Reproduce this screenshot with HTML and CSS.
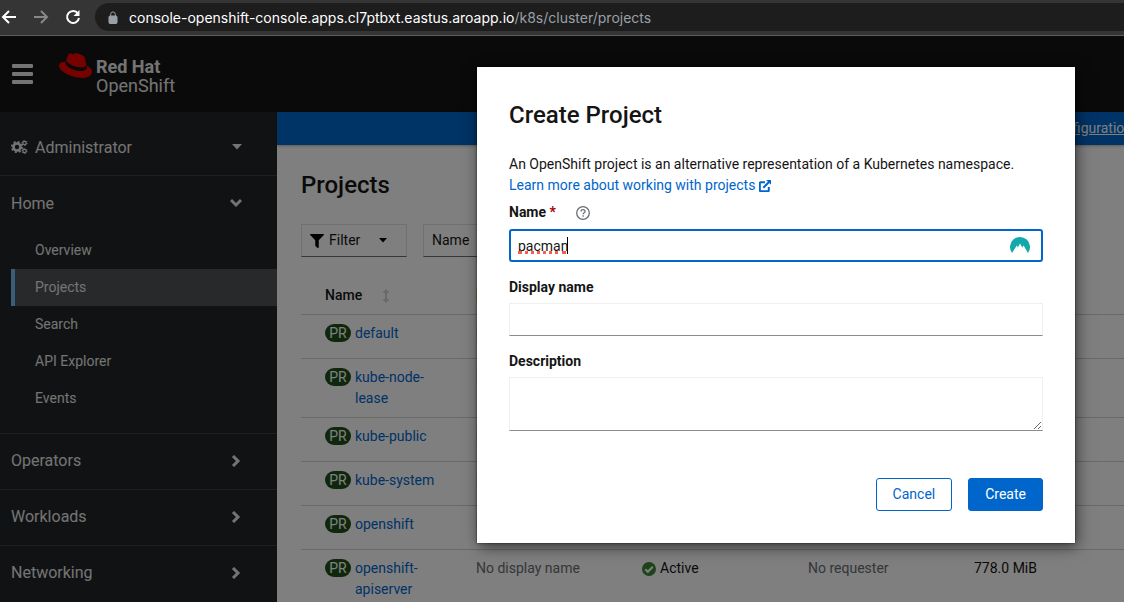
FILE: index.html
```html
<!DOCTYPE html>
<html lang="en">
<head>
<meta charset="utf-8">
<title>Projects · Red Hat OpenShift</title>
<link rel="stylesheet" href="styles.css">
</head>
<body>
<div class="browser-bar">
  <button class="nav-btn" aria-label="Back"><svg width="16" height="16" viewBox="0 0 16 16"><path d="M15 8H2M8 2 2 8l6 6" /></svg></button>
  <button class="nav-btn nav-btn-off" aria-label="Forward"><svg width="16" height="16" viewBox="0 0 16 16"><path d="M1 8h13M8 2l6 6-6 6" /></svg></button>
  <button class="nav-btn" aria-label="Reload"><svg width="16" height="16" viewBox="0 0 16 16"><path d="M13 4.500A6 6 0 1 0 14 9" /><path class="solid" d="M14.500 1v6h-6z" /></svg></button>
  <div class="address">
    <svg class="lock" width="10" height="13" viewBox="0 0 10 13"><rect x="1" y="5" width="8" height="7.500" rx="1" /><path d="M2.700 5V3.200a2.300 2.300 0 0 1 4.600 0V5" /></svg>
    <span class="url"><span class="host">console-openshift-console.apps.cl7ptbxt.eastus.aroapp.io</span>/k8s/cluster/projects</span>
  </div>
</div>
<div class="app">
  <header class="masthead">
    <button class="menu-btn" aria-label="Menu"><span></span><span></span><span></span></button>
    <div class="brand">
      <svg class="hat" width="33" height="25" viewBox="0 2.9 24 18.2"><path d="M16.009 13.386c1.577 0 3.86-.326 3.86-2.202a1.765 1.765 0 0 0-.04-.431l-.94-4.08c-.216-.898-.406-1.305-1.982-2.093-1.223-.625-3.888-1.658-4.676-1.658-.733 0-.947.946-1.822.946-.842 0-1.467-.706-2.255-.706-.757 0-1.25.515-1.63 1.576 0 0-1.06 2.99-1.197 3.424a.81.81 0 0 0-.028.245c0 1.162 4.577 4.974 10.71 4.974m4.101-1.435c.218 1.032.218 1.14.218 1.277 0 1.765-1.984 2.745-4.593 2.745-5.895.004-11.06-3.451-11.06-5.734a2.326 2.326 0 0 1 .19-.925C2.746 9.415 0 9.794 0 12.217c0 3.969 9.405 8.861 16.851 8.861 5.71 0 7.149-2.582 7.149-4.62 0-1.605-1.387-3.425-3.887-4.512" /></svg>
      <div class="brand-name"><b>Red Hat</b><span>OpenShift</span></div>
    </div>
  </header>
  <div class="body">
    <nav class="sidebar">
      <button class="perspective">
        <svg class="cogs" width="17" height="14" viewBox="0 0 17 14"><circle cx="6" cy="7" r="3.500" stroke-width="2.600" /><circle cx="6" cy="7" r="5.200" stroke-width="1.800" stroke-dasharray="2.040 2.040" /><circle cx="13.500" cy="3" r="1.700" stroke-width="1.300" /><circle cx="13.500" cy="3" r="2.600" stroke-width="1" stroke-dasharray="1.360 1.360" /><circle cx="13.500" cy="11" r="1.700" stroke-width="1.300" /><circle cx="13.500" cy="11" r="2.600" stroke-width="1" stroke-dasharray="1.360 1.360" /></svg>
        <span class="grow">Administrator</span>
        <svg class="caret" width="10" height="6" viewBox="0 0 10 6"><path d="M0 0h10L5 5.500z" /></svg>
      </button>
      <button class="section"><span class="grow">Home</span><svg class="chev" width="12" height="12" viewBox="0 0 12 12"><path d="m1 3 5 5 5-5" /></svg></button>
      <ul class="sub">
        <li><a href="#">Overview</a></li>
        <li><a href="#" class="current">Projects</a></li>
        <li><a href="#">Search</a></li>
        <li><a href="#">API Explorer</a></li>
        <li><a href="#">Events</a></li>
      </ul>
      <button class="section ruled"><span class="grow">Operators</span><svg class="chev" width="12" height="12" viewBox="0 0 12 12"><path d="m3 1 5 5-5 5" /></svg></button>
      <button class="section ruled"><span class="grow">Workloads</span><svg class="chev" width="12" height="12" viewBox="0 0 12 12"><path d="m3 1 5 5-5 5" /></svg></button>
      <button class="section ruled"><span class="grow">Networking</span><svg class="chev" width="12" height="12" viewBox="0 0 12 12"><path d="m3 1 5 5-5 5" /></svg></button>
    </nav>
    <main class="main">
      <div class="banner"><a href="#">configuration</a></div>
      <div class="content">
        <h1>Projects</h1>
        <div class="toolbar">
          <button class="tool filter"><svg width="14" height="14" viewBox="0 0 512 512"><path d="M487.976 0H24.028C2.710 0-8.047 25.866 7.058 40.971L192 225.941V432c0 7.831 3.821 15.170 10.237 19.662l80 55.980C298.020 518.690 320 507.493 320 487.980V225.941l184.947-184.970C520.021 25.896 509.338 0 487.976 0z" /></svg><span>Filter</span><svg class="drop" width="8" height="5" viewBox="0 0 8 5"><path d="M0 0h8L4 4.500z" /></svg></button>
          <button class="tool by-name">Name</button>
        </div>
        <table>
          <colgroup><col class="col-name"><col class="col"><col class="col"><col class="col"><col></colgroup>
          <thead><tr><th><span class="sort">Name<svg width="8" height="14" viewBox="0 0 8 14"><path d="M4 0 7.500 4H5v6h2.500L4 14 .5 10H3V4H.5z" /></svg></span></th><th>Display name</th><th></th><th></th><th></th></tr></thead>
          <tbody>
            <tr><td><div class="res"><span class="pr">PR</span><a href="#">default</a></div></td><td class="muted">No display name</td><td></td><td></td><td></td></tr>
            <tr><td><div class="res"><span class="pr">PR</span><a href="#">kube-node-lease</a></div></td><td class="muted">No display name</td><td></td><td></td><td></td></tr>
            <tr><td><div class="res"><span class="pr">PR</span><a href="#">kube-public</a></div></td><td class="muted">No display name</td><td></td><td></td><td></td></tr>
            <tr><td><div class="res"><span class="pr">PR</span><a href="#">kube-system</a></div></td><td class="muted">No display name</td><td></td><td></td><td></td></tr>
            <tr><td><div class="res"><span class="pr">PR</span><a href="#">openshift</a></div></td><td class="muted">No display name</td><td></td><td></td><td></td></tr>
            <tr><td><div class="res"><span class="pr">PR</span><a href="#">openshift-apiserver</a></div></td><td class="muted">No display name</td><td><span class="status"><svg width="14" height="14" viewBox="0 0 14 14"><circle cx="7" cy="7" r="7" /><path d="m3.300 7.300 2.500 2.500 5-5" /></svg>Active</span></td><td class="muted">No requester</td><td>778.0 MiB</td></tr>
          </tbody>
        </table>
      </div>
    </main>
  </div>
  <div class="backdrop">
    <form class="modal" role="dialog" aria-labelledby="dlg-title">
      <h2 id="dlg-title">Create Project</h2>
      <p>An OpenShift project is an alternative representation of a Kubernetes namespace.<br>
        <a href="#">Learn more about working with projects <svg width="12" height="12" viewBox="0 0 12 12"><path d="M6 2.200H1.800a1 1 0 0 0-1 1v7a1 1 0 0 0 1 1h7a1 1 0 0 0 1-1V7M4.300 7.700 10 2" /><path class="solid" d="M7.200 0H12v4.800z" /></svg></a></p>
      <div class="label-row"><label for="name">Name <span class="req">*</span></label><button type="button" class="help" aria-label="Help"><svg width="14" height="14" viewBox="0 0 14 14"><circle cx="7" cy="7" r="6.300" /><path d="M5 5.600c0-2.600 4-2.500 4-.2 0 1.400-1.900 1.400-1.900 2.900M7.100 9.300v1.500" /></svg></button></div>
      <div class="name-field">
        <input id="name" class="field active" type="text" value="pacman" spellcheck="false">
        <span class="squiggle"></span>
        <span class="cursor"></span>
        <svg class="vpn" width="20" height="17" viewBox="0 0 20 17"><path d="M2 17A10 10 0 1 1 18 17L13.600 9.600 12.300 11.500 12.700 12.300 10 7.500 7.500 12.300 7.800 11 6.800 9.600z" /></svg>
      </div>
      <label class="gap" for="display">Display name</label>
      <input id="display" class="field" type="text">
      <label class="gap" for="desc">Description</label>
      <textarea id="desc" class="field area"></textarea>
      <div class="actions"><button type="button" class="btn">Cancel</button><button type="button" class="btn primary">Create</button></div>
    </form>
  </div>
</div>
</body>
</html>
```
FILE: styles.css
```css
* { box-sizing: border-box; }
body {
  margin: 0;
  height: 100vh;
  display: flex;
  flex-direction: column;
  overflow: hidden;
  font: 14px/21px Roboto, "Liberation Sans", sans-serif;
  color: #151515;
}
button, input, textarea { font: inherit; color: inherit; }
button { padding: 0; border: 0; background: none; text-align: left; }
a { color: #06c; text-decoration: none; }
svg { flex: none; }
.grow { flex: 1; }

.browser-bar {
  display: flex;
  align-items: center;
  height: 36px;
  padding: 0 0 1px 1px;
  gap: 16px;
  background: #353535;
  border-bottom: 1px solid #5c5c5c;
}
.nav-btn { display: flex; }
.nav-btn svg { fill: none; stroke: #fff; stroke-width: 2; }
.nav-btn .solid { fill: #fff; stroke: none; }
.nav-btn-off svg { stroke: #888; }
.address {
  flex: 1;
  display: flex;
  align-items: center;
  gap: 11px;
  height: 28px;
  margin-left: -2px;
  padding-left: 13px;
  border-radius: 14px 0 0 14px;
  background: #1d1d1e;
}
.lock { fill: #9aa0a6; stroke: #9aa0a6; stroke-width: 1; }
.lock path { fill: none; }
.url { font-family: Inter, Roboto, sans-serif; color: #9aa0a6; white-space: nowrap; }
.host { color: #fff; }

.app {
  position: relative;
  flex: 1;
  min-height: 0;
  display: flex;
  flex-direction: column;
  overflow: hidden;
}
.masthead {
  flex: none;
  display: flex;
  gap: 26px;
  height: 76px;
  padding: 17px 12px;
  background: #151515;
}
.menu-btn { display: flex; flex-direction: column; gap: 4px; width: 21px; padding-top: 11px; }
.menu-btn span { height: 4px; border-radius: 1px; background: #e8e8e8; }
.brand { display: flex; gap: 4px; color: #e8e8e8; }
.hat { fill: #e00; }
.brand-name { display: flex; flex-direction: column; padding-top: 4px; font-size: 18px; line-height: 19px; }
.body { flex: 1; display: flex; min-height: 0; }

.sidebar { flex: none; width: 277px; background: #212427; color: #e8e8e8; }
.perspective, .section {
  display: flex;
  align-items: center;
  width: 100%;
  padding: 0 35px 0 11px;
  font-size: 16px;
}
.perspective { height: 64px; padding-top: 7px; gap: 7px; border-bottom: 1px solid #3c3f42; }
.cogs { fill: none; stroke: #e8e8e8; }
.caret { fill: #e8e8e8; }
.section { height: 56px; padding-bottom: 2px; }
.ruled { border-top: 1px solid #3c3f42; }
.chev { fill: none; stroke: #e8e8e8; stroke-width: 3; }
.sub { margin: 0; padding: 0 0 16px 11px; list-style: none; }
.sub a { display: block; padding: 8px 20px; border-left: 4px solid transparent; color: #e8e8e8; }
.sub .current { background: #4f5255; border-color: #73bcf7; }

.main { flex: 1; min-width: 0; background: #fff; }
.banner {
  display: flex;
  justify-content: flex-end;
  height: 33px;
  padding: 6px 0;
  background: #06c;
  box-shadow: 0 1px 3px rgba(0, 0, 0, .3);
}
.banner a { margin-right: -8px; color: #fff; text-decoration: underline; }
.content { padding: 25px 0 0 24px; }
h1, h2 { margin: 0 0 23px; font-weight: 500; font-size: 24px; line-height: 31px; }
.toolbar { display: flex; gap: 16px; }
.tool {
  display: flex;
  align-items: center;
  height: 33px;
  padding: 0 8px;
  border: 1px solid #e0e0e0;
  border-bottom-color: #6a6e73;
}
.filter { width: 106px; gap: 5px; }
.drop { margin-left: 14px; }
.by-name { width: 120px; }

table { width: 100%; margin-top: 17px; border-collapse: collapse; table-layout: fixed; }
.col-name { width: 159px; }
.col { width: 166px; }
tr { border-bottom: 1px solid #d2d2d2; }
th, td { height: 44px; padding: 8px 16px; vertical-align: top; text-align: left; }
th { height: 40px; padding-top: 11px; font-weight: 500; }
th:first-child, td:first-child { padding-left: 24px; padding-right: 8px; }
.sort { display: flex; align-items: center; gap: 20px; }
.sort svg { fill: #d2d2d2; }
.muted { color: #6a6e73; }
.res { display: flex; align-items: flex-start; gap: 4px; }
.res a { max-width: 90px; }
.pr {
  flex: none;
  width: 26px;
  margin-top: 1px;
  border-radius: 20px;
  background: #1e4f18;
  color: #fff;
  text-align: center;
  line-height: 18px;
}
.status { display: flex; align-items: center; gap: 4px; }
.status svg { fill: #3e8635; }
.status path { fill: none; stroke: #fff; stroke-width: 2; }

.backdrop {
  position: absolute;
  inset: 0;
  display: flex;
  justify-content: flex-end;
  align-items: flex-start;
  padding: 31px 49px 0 16px;
  background: rgba(0, 0, 0, .5);
}
.modal {
  display: flex;
  flex-direction: column;
  width: 598px;
  padding: 33px 32px 32px;
  background: #fff;
  box-shadow: 0 0 2px rgba(0, 0, 0, .7), 2px 4px 14px rgba(0, 0, 0, .55);
}
.modal p { margin: 0 0 6px; }
.modal p svg { fill: none; stroke: #06c; stroke-width: 2; vertical-align: -2px; }
.modal p .solid { fill: #06c; stroke: none; }
.modal label { font-weight: 700; }
.req { color: #a30000; }
.label-row { display: flex; align-items: center; gap: 20px; margin-bottom: 6px; }
.help { display: flex; }
.help svg { fill: none; stroke: #6a6e73; stroke-width: 1.3; }
.modal .gap { margin: 15px 0 5px; }
.field {
  width: 100%;
  height: 33px;
  padding: 0 8px;
  border: 1px solid #f0f0f0;
  border-bottom-color: #8a8d90;
  border-radius: 0;
  background: #fff;
  outline: 0;
}
.active {
  padding: 0 7px;
  border: 2px solid #06c;
  border-radius: 3px;
}
.area { height: 54px; resize: vertical; }
.name-field { position: relative; display: flex; }
.squiggle { position: absolute; left: 9px; top: 22px; width: 48px; border-bottom: 3px dotted #fb5c52; }
.cursor { position: absolute; left: 58px; top: 8px; width: 1px; height: 17px; background: #000; }
.vpn { position: absolute; right: 13px; top: 7px; fill: #12a9ac; }
.actions { display: flex; justify-content: flex-end; gap: 16px; margin-top: 47px; }
.btn {
  height: 33px;
  padding: 0 16px;
  border: 1px solid #06c;
  border-radius: 3px;
  color: #06c;
}
.primary { background: #06c; color: #fff; }
```
